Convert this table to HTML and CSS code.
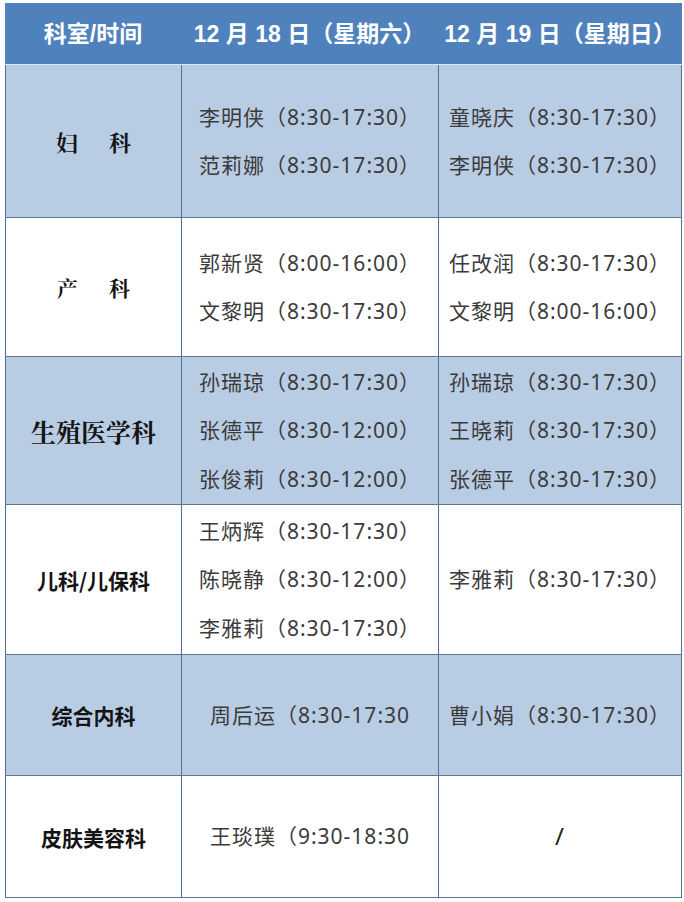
FILE: index.html
```html
<!DOCTYPE html>
<html lang="zh-CN">
<head>
<meta charset="utf-8">
<title>排班表</title>
<link rel="stylesheet" href="styles.css">
</head>
<body>
<div class="schedule">
  <div class="row head">
    <div class="cell">科室/时间</div>
    <div class="cell">12 月 18 日（星期六）</div>
    <div class="cell">12 月 19 日（星期日）</div>
  </div>
  <div class="row tint h1">
    <div class="cell dept serif">妇<span class="gap"></span>科</div>
    <div class="cell names"><p>李明侠（8:30-17:30）</p><p>范莉娜（8:30-17:30）</p></div>
    <div class="cell names"><p>童晓庆（8:30-17:30）</p><p>李明侠（8:30-17:30）</p></div>
  </div>
  <div class="row h2">
    <div class="cell dept serif small">产<span class="gap"></span>科</div>
    <div class="cell names"><p>郭新贤（8:00-16:00）</p><p>文黎明（8:30-17:30）</p></div>
    <div class="cell names"><p>任改润（8:30-17:30）</p><p>文黎明（8:00-16:00）</p></div>
  </div>
  <div class="row tint h3">
    <div class="cell dept serif big">生殖医学科</div>
    <div class="cell names"><p>孙瑞琼（8:30-17:30）</p><p>张德平（8:30-12:00）</p><p>张俊莉（8:30-12:00）</p></div>
    <div class="cell names"><p>孙瑞琼（8:30-17:30）</p><p>王晓莉（8:30-17:30）</p><p>张德平（8:30-17:30）</p></div>
  </div>
  <div class="row h4">
    <div class="cell dept">儿科/儿保科</div>
    <div class="cell names"><p>王炳辉（8:30-17:30）</p><p>陈晓静（8:30-12:00）</p><p>李雅莉（8:30-17:30）</p></div>
    <div class="cell names"><p>李雅莉（8:30-17:30）</p></div>
  </div>
  <div class="row tint h5">
    <div class="cell dept">综合内科</div>
    <div class="cell names"><p>周后运（8:30-17:30</p></div>
    <div class="cell names"><p>曹小娟（8:30-17:30）</p></div>
  </div>
  <div class="row h6">
    <div class="cell dept">皮肤美容科</div>
    <div class="cell names"><p>王琰璞（9:30-18:30</p></div>
    <div class="cell names"><p class="slash">/</p></div>
  </div>
</div>
</body>
</html>
```
FILE: styles.css
```css
html, body {
  margin: 0;
  padding: 0;
  background: #ffffff;
}

.schedule {
  margin: 3px 0 0 5px;
  width: 677px;
  display: flex;
  flex-direction: column;
}

.row {
  display: grid;
  grid-template-columns: 176px 257px 244px;
  background: #ffffff;
  border-bottom: 1px solid #5f7892;
  box-sizing: border-box;
}

.row.tint {
  background: #b8cce4;
}

.row.head {
  background: #4f81bd;
  height: 62px;
  border-bottom: 1px solid #dbe5f1;
}

.h1 { height: 153px; }
.h2 { height: 139px; }
.h3 { height: 148px; }
.h4 { height: 150px; }
.h5 { height: 121px; }
.h6 { height: 122px; }

.cell {
  box-sizing: border-box;
  display: flex;
  flex-direction: column;
  justify-content: center;
  align-items: center;
  text-align: center;
  border-left: 1px solid #4d6f98;
}

.cell:last-child {
  border-right: 1px solid #4d6f98;
}

.head .cell {
  border: none;
  color: #ffffff;
  font-family: "Liberation Sans", "Noto Sans CJK SC", sans-serif;
  font-weight: 700;
  font-size: 23px;
  padding-bottom: 4px;
}

.names p {
  margin: 0;
  font-family: "Noto Sans", "Noto Sans CJK SC", sans-serif;
  font-size: 21px;
  letter-spacing: 1px;
  line-height: 48.5px;
  color: #3b3b3b;
  white-space: nowrap;
}

.names p.slash {
  font-size: 24px;
  color: #222222;
}

.dept {
  font-family: "Noto Sans CJK SC", sans-serif;
  font-weight: 700;
  font-size: 21px;
  color: #141414;
  flex-direction: row;
}

.dept.serif {
  font-family: "Noto Serif CJK SC", "Noto Sans CJK SC", serif;
  font-size: 22px;
}

.dept.small {
  font-size: 21px;
}

.dept.big {
  font-size: 25px;
}

.gap {
  display: inline-block;
  width: 31px;
}
```
